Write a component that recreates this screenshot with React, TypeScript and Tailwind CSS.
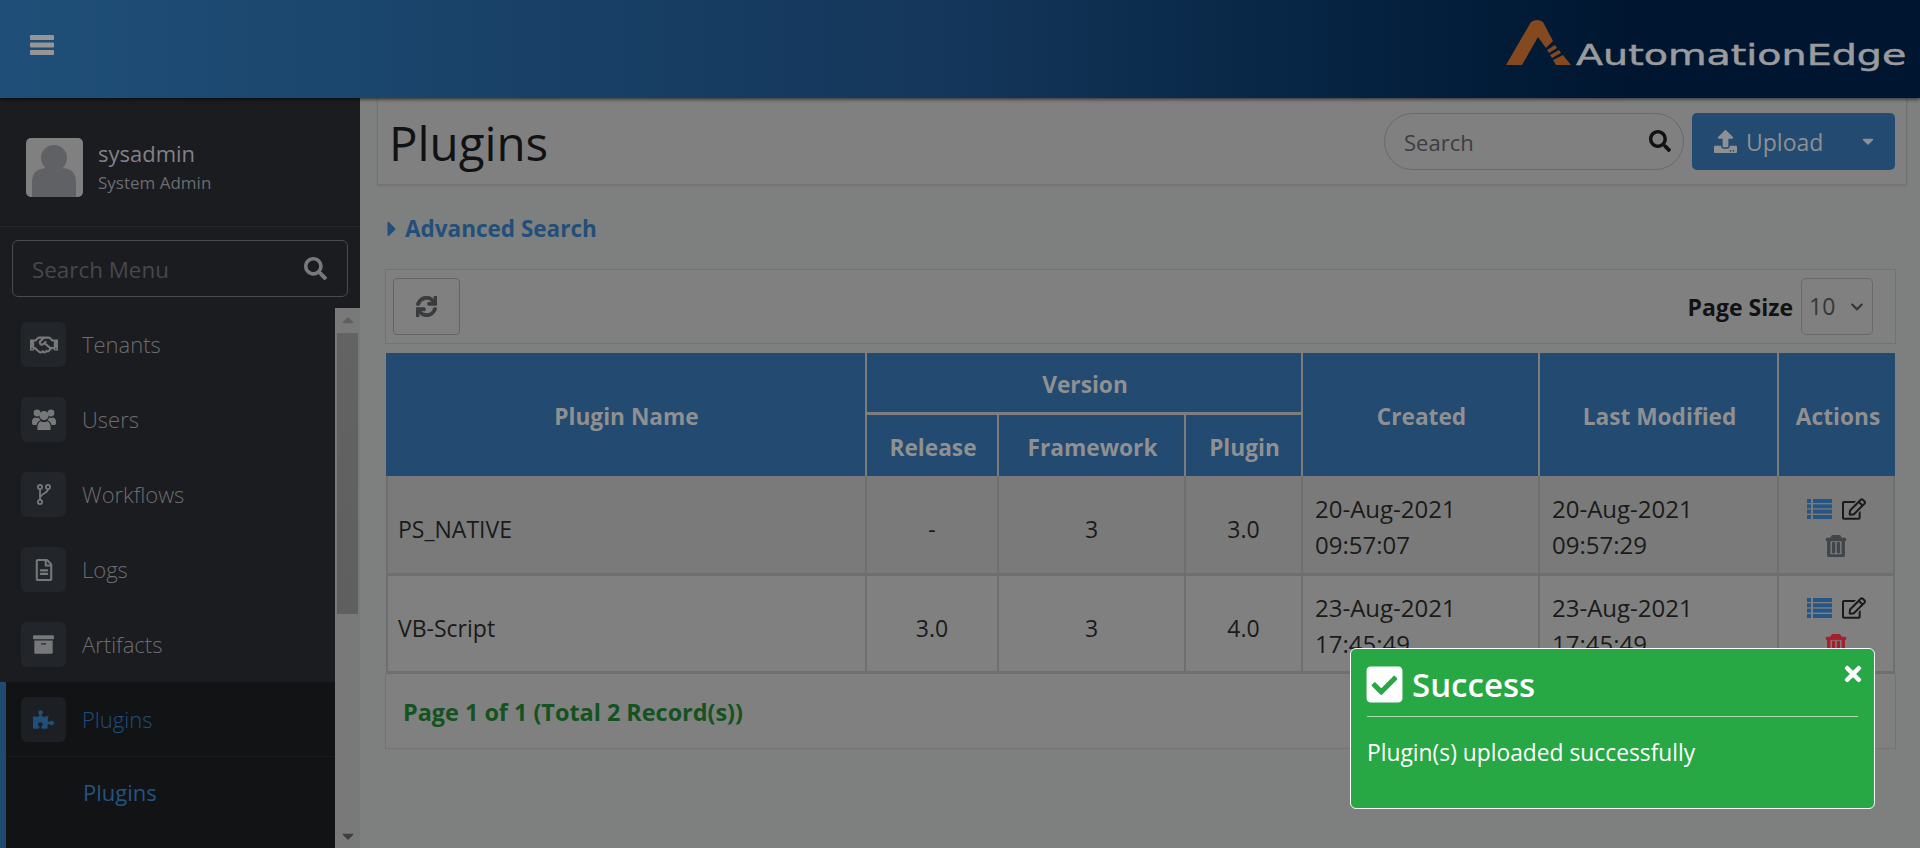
import React from 'react';
import {
  FaArchive, FaCaretDown, FaCaretRight, FaCheckSquare, FaChevronDown,
  FaPuzzlePiece, FaRegEdit, FaRegFileAlt, FaRegHandshake, FaRegTrashAlt, FaSearch, FaSync, FaTimes, FaUpload,
} from 'react-icons/fa';

const UsersIcon = () => (
  <svg width="24" height="21" viewBox="0 0 24 21" fill="currentColor">
    <circle cx="5" cy="4" r="3.4" />
    <circle cx="19" cy="4" r="3.4" />
    <circle cx="12" cy="6.6" r="4.6" />
    <path d="M0 13 Q0 9 3 8.4 Q5 9.6 7 8.6 Q7.4 10.6 8.6 11.6 Q5.4 12.4 4.6 16 H1.4 Q0 16 0 14.6Z" />
    <path d="M24 13 Q24 9 21 8.4 Q19 9.6 17 8.6 Q16.6 10.6 15.4 11.6 Q18.6 12.4 19.4 16 H22.6 Q24 16 24 14.6Z" />
    <path d="M5.4 21 Q5 13.4 8.8 12.2 Q12 14 15.2 12.2 Q19 13.4 18.6 21 Z" />
  </svg>
);

const ForkIcon = () => (
  <svg width="14" height="21" viewBox="0 0 14 21" fill="none" stroke="currentColor" strokeWidth="1.8">
    <circle cx="3" cy="3" r="2.1" />
    <circle cx="11" cy="3" r="2.1" />
    <circle cx="3" cy="18" r="2.1" />
    <path d="M3 5.1 V15.9 M11 5.1 C11 10 3.4 9 3 14" />
  </svg>
);

const ListIcon = () => (
  <svg width="25" height="20" viewBox="0 0 25 20" fill="#275685">
    <rect y="0" width="4" height="4" />
    <rect x="6" y="0" width="19" height="4" />
    <rect y="5.3" width="4" height="4" />
    <rect x="6" y="5.3" width="19" height="4" />
    <rect y="10.6" width="4" height="4" />
    <rect x="6" y="10.6" width="19" height="4" />
    <rect y="16" width="4" height="4" />
    <rect x="6" y="16" width="19" height="4" />
  </svg>
);

const menu = [
  { label: 'Tenants', icon: <FaRegHandshake size={28} /> },
  { label: 'Users', icon: <UsersIcon /> },
  { label: 'Workflows', icon: <ForkIcon /> },
  { label: 'Logs', icon: <FaRegFileAlt size={22} /> },
  { label: 'Artifacts', icon: <FaArchive size={21} /> },
];

const rows = [
  { name: 'PS_NATIVE', release: '-', framework: '3', plugin: '3.0', created: ['20-Aug-2021', '09:57:07'], modified: ['20-Aug-2021', '09:57:29'], trash: 'text-[#41464b]', bg: 'bg-[#7a7a7a]', h: 'h-[100px]' },
  { name: 'VB-Script', release: '3.0', framework: '3', plugin: '4.0', created: ['23-Aug-2021', '17:45:49'], modified: ['23-Aug-2021', '17:45:49'], trash: 'text-[#a3202c]', bg: 'bg-[#808080]', h: 'h-[98px]' },
];

const thBase = 'border-[#7d7d7d] pl-[2px] pt-[5px] font-bold text-center text-[#8f9092] text-[22.7px] align-middle';
const thClass = `border-r-2 ${thBase}`;
const tdBase = 'border-r-2 border-b-[3px] border-[#6f6f6f] text-center text-[23px] text-[#1a1a1a] align-middle';
const tdClass = `${tdBase} pt-[9px]`;
const dateClass = 'border-r-2 border-b-[3px] border-[#6f6f6f] pl-[12px] pt-[5px] text-left text-[24px] leading-[36px] text-[#1a1a1a] align-middle';

const App: React.FC = () => {
  return (
    <div className="relative h-[848px] w-[1920px] overflow-hidden bg-[#7e807f] font-['Open_Sans',sans-serif]">
      {/* top bar */}
      <header className="relative z-10 flex h-[98px] items-center justify-between bg-gradient-to-r from-[#1f4f78] via-[#14365a] via-50% to-[#001630] to-85% pl-[30px] pr-[15px] shadow-[0_1px_4px_rgba(0,0,0,0.7)]">
        <svg width="24" height="20" viewBox="0 0 24 20" fill="#969696" className="mb-[8px]">
          <rect width="24" height="5" rx="1" />
          <rect y="7.5" width="24" height="5" rx="1" />
          <rect y="15" width="24" height="5" rx="1" />
        </svg>
        <div className="mb-[4px] flex items-end gap-[5px]">
          <svg width="65" height="46" viewBox="0 0 65 46" fill="#85491f" className="mb-[10px]">
            <path d="M0 46 L25 3 Q31 -1 37 3 L47 22 L40 29 L32 18 L16 46 Z" />
            <path d="M41 31 L49 26 L51 29 L43 34 Z M44 36 L53 31 L55 34 L46 39 Z M47 41 L57 36 L65 46 L50 46 Z" />
          </svg>
          <span className="block w-[329px] whitespace-nowrap">
            <span className="inline-block origin-left scale-x-[1.44] font-['DejaVu_Sans',sans-serif] text-[27.5px] leading-[40px] text-[#9a9b9e] [-webkit-text-stroke:0.5px_#9a9b9e]">AutomationEdge</span>
          </span>
        </div>
      </header>

      <div className="flex h-[750px]">
        {/* sidebar */}
        <aside className="flex w-[360px] shrink-0 flex-col bg-[#1b1c20]">
          <div className="flex h-[129px] items-center gap-[15px] border-b border-[#26272b] pt-[11px] pl-[26px]">
            <div className="h-[59px] w-[57px] overflow-hidden rounded-[5px] bg-[#808080]">
              <svg width="57" height="59" viewBox="0 0 57 59">
                <circle cx="28" cy="20" r="13" fill="#5f6165" />
                <path d="M6 59 V44 Q6 31 20 30 Q28 36 37 30 Q50 31 50 44 V59 Z" fill="#5f6165" />
              </svg>
            </div>
            <div className="flex flex-col">
              <span className="text-[22px] leading-[30px] text-[#808288]">sysadmin</span>
              <span className="text-[17px] leading-[30px] text-[#6a6c72]">System Admin</span>
            </div>
          </div>
          <div className="px-[12px] pb-[11px] pt-[13px]">
            <div className="flex h-[57px] items-center justify-between rounded-[6px] border border-[#4a4b50] pl-[19px] pr-[20px]">
              <span className="pt-[3px] text-[22.4px] text-[#46484d]">Search Menu</span>
              <FaSearch size={23} className="text-[#78797c]" />
            </div>
          </div>
          <div className="flex min-h-0 flex-1">
            <nav className="-mt-px flex min-w-0 flex-1 flex-col">
              {menu.map(item => (
                <div key={item.label} className="flex h-[75px] shrink-0 items-center gap-[16px] pl-[21px]">
                  <span className="flex h-[45px] w-[45px] items-center justify-center rounded-[6px] bg-[#22252a] text-[#777879]">{item.icon}</span>
                  <span className="text-[22px] font-light text-[#6c6d6f]">{item.label}</span>
                </div>
              ))}
              <div className="flex flex-1 flex-col border-l-[6px] border-[#214a70] bg-[#121315]">
                <div className="flex h-[75px] shrink-0 items-center gap-[16px] border-b border-[#18191b] pl-[15px]">
                  <span className="flex h-[45px] w-[45px] items-center justify-center rounded-[6px] bg-[#1c1f23] text-[#214f7a]"><FaPuzzlePiece size={21} /></span>
                  <span className="text-[22px] font-light text-[#214f7a]">Plugins</span>
                </div>
                <div className="pl-[77px] pt-[19px] text-[22px] text-[#255380]">Plugins</div>
              </div>
            </nav>
            <div className="flex w-[25px] shrink-0 flex-col items-center bg-[#797979] text-[#3f3f3f]">
              <span className="flex h-[25px] items-center text-[#5f5f5f]"><FaCaretDown size={18} className="rotate-180" /></span>
              <div className="h-[281px] w-[21px] bg-gradient-to-b from-[#636363] to-[#5f5f5f]" />
              <div className="flex-1" />
              <span className="flex h-[25px] items-center"><FaCaretDown size={18} /></span>
            </div>
          </div>
        </aside>

        {/* page */}
        <main className="min-w-0 flex-1 pl-[17px] pr-[13px]">
          <div className="flex h-[87px] items-center justify-between border-x border-b border-[#737373] bg-[#808080] pl-[11px] pr-[11px] shadow-[0_1px_2px_rgba(0,0,0,0.1)]">
            <h1 className="pt-[3px] text-[47.5px] font-normal leading-none text-[#111214]">Plugins</h1>
            <div className="flex items-center gap-[8px]">
              <div className="flex h-[57px] w-[300px] items-center justify-between rounded-full border border-[#6a6a6a] pl-[19px] pr-[12px]">
                <span className="pt-[3px] text-[22px] text-[#3c3e41]">Search</span>
                <FaSearch size={22} className="text-[#101113]" />
              </div>
              <div className="flex h-[57px] w-[203px] items-center justify-between rounded-[5px] bg-[#234a70] pl-[22px] pr-[18px] text-[#8f9092]">
                <span className="flex items-center gap-[9px] text-[23px]"><FaUpload size={23} /><span className="pt-[3px]">Upload</span></span>
                <FaCaretDown size={18} />
              </div>
            </div>
          </div>

          <div className="flex items-center gap-[1px] pl-[9px] pt-[28px] text-[22.5px] font-bold leading-[32px] text-[#234e79]">
            <FaCaretRight size={24} className="-ml-[6px]" />
            <span>Advanced Search</span>
          </div>

          <div className="ml-[8px] mr-[11px] mt-[24px]">
            <div className="flex h-[75px] items-center justify-between border border-[#737373] bg-[#808080] pl-[7px] pr-[22px]">
              <button className="flex h-[57px] w-[67px] items-center justify-center rounded-[4px] border border-[#646464] text-[#3a3b3d]">
                <FaSync size={21} className="stroke-[24]" />
              </button>
              <div className="flex items-center gap-[8px]">
                <span className="pt-[2px] text-[23px] font-bold text-[#111214]">Page Size</span>
                <div className="flex h-[57px] w-[72px] items-center justify-between rounded-[5px] border border-[#6a6a6a] pl-[7px] pr-[8px] text-[23px] text-[#35373a]">
                  10
                  <FaChevronDown size={14} />
                </div>
              </div>
            </div>

            <table className="ml-px mt-[9px] w-[1509px] table-fixed border-separate border-spacing-0">
              <colgroup>
                <col className="w-[481px]" />
                <col className="w-[132px]" />
                <col className="w-[187px]" />
                <col className="w-[117px]" />
                <col className="w-[237px]" />
                <col className="w-[239px]" />
                <col />
              </colgroup>
              <thead className="bg-[#234a70]">
                <tr className="h-[62px]">
                  <th rowSpan={2} className={thClass}>Plugin Name</th>
                  <th colSpan={3} className={`${thClass} border-b-[3px]`}>Version</th>
                  <th rowSpan={2} className={thClass}>Created</th>
                  <th rowSpan={2} className={thClass}>Last Modified</th>
                  <th rowSpan={2} className={thBase}>Actions</th>
                </tr>
                <tr className="h-[61px]">
                  <th className={thClass}>Release</th>
                  <th className={thClass}>Framework</th>
                  <th className={thClass}>Plugin</th>
                </tr>
              </thead>
              <tbody>
                {rows.map(row => (
                  <tr key={row.name} className={`${row.h} ${row.bg}`}>
                    <td className={`${tdClass} border-l-2 pl-[10px] text-left`}>{row.name}</td>
                    <td className={tdClass}>{row.release}</td>
                    <td className={tdClass}>{row.framework}</td>
                    <td className={tdClass}>{row.plugin}</td>
                    <td className={dateClass}>{row.created[0]}<br />{row.created[1]}</td>
                    <td className={dateClass}>{row.modified[0]}<br />{row.modified[1]}</td>
                    <td className={`${tdBase} pt-[5px]`}>
                      <div className="flex flex-wrap items-center justify-center gap-x-[10px] gap-y-[14px]">
                        <ListIcon />
                        <FaRegEdit size={24} className="text-[#1a1a1a]" />
                        <FaRegTrashAlt size={22} className={`basis-full stroke-[30] ${row.trash}`} />
                      </div>
                    </td>
                  </tr>
                ))}
              </tbody>
            </table>

            <div className="flex h-[75px] items-center border-x border-b border-[#737373] bg-[#808080] pl-[17px] pt-[3px] text-[23.4px] font-bold text-[#14521f]">
              Page 1 of 1 (Total 2 Record(s))
            </div>
          </div>
        </main>
      </div>

      {/* toast sits on top of the page */}
      <div className="absolute left-[1350px] top-[648px] z-20 h-[161px] w-[525px] rounded-[6px] border-[1.5px] border-white bg-[#28a745] px-[16px] text-white">
        <div className="flex h-[68px] items-center gap-[7px] border-b border-[#a9dab5] pt-[4px]">
          <FaCheckSquare size={41} className="-ml-[3px]" />
          <span className="text-[33px] font-semibold">Success</span>
        </div>
        <FaTimes size={24} className="absolute right-[9px] top-[13px]" />
        <p className="mt-[20px] text-[22.8px] leading-[32px]">Plugin(s) uploaded successfully</p>
      </div>
    </div>
  );
};

export default App;
